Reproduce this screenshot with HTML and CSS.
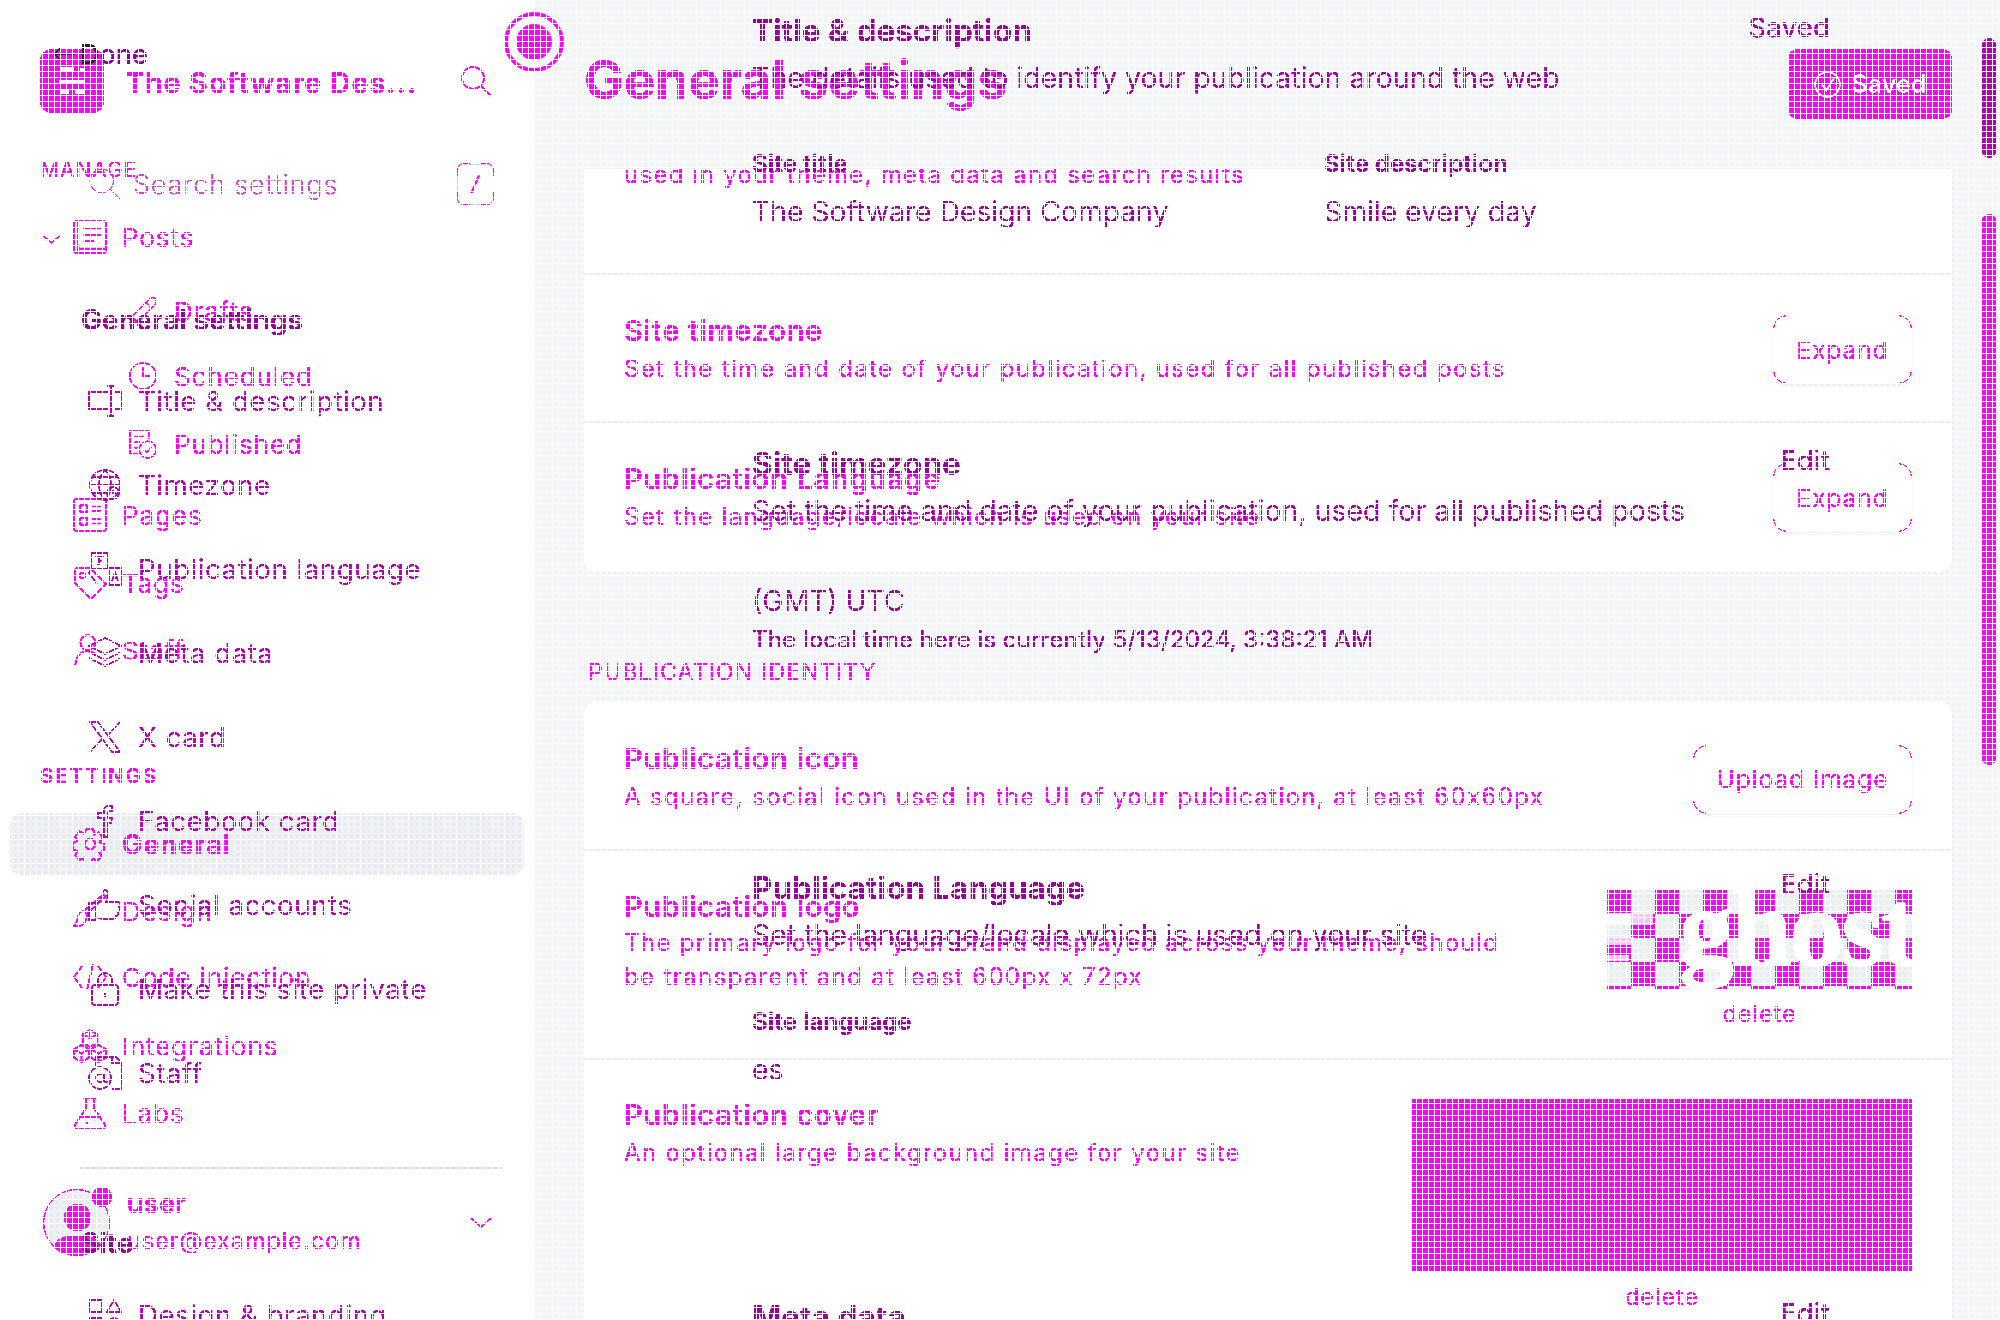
FILE: index.html
```html
<!DOCTYPE html>
<html lang="en">
<head>
<meta charset="utf-8">
<title>General settings</title>
<link rel="stylesheet" href="styles.css">
</head>
<body>
<svg class="defs" aria-hidden="true">
  <filter id="crisp" color-interpolation-filters="sRGB" x="0" y="0" width="100%" height="100%">
    <feComponentTransfer><feFuncG type="table" tableValues="0 0 0 0 0 0 0 .7 .8 .9 1"/></feComponentTransfer>
  </filter>
  <filter id="crisp-top" color-interpolation-filters="sRGB" x="0" y="0" width="100%" height="100%">
    <feComponentTransfer><feFuncA type="table" tableValues="0 .1 .5 .9 1 1"/></feComponentTransfer>
  </filter>
  <symbol id="i-search" viewBox="0 0 32 32"><circle cx="13" cy="13" r="11"/><path d="M21 21l10 10"/></symbol>
  <symbol id="i-posts" viewBox="0 0 32 32"><rect x="1" y="1" width="30" height="30" rx="2"/><path d="M5 1v30M10 8h16M10 14h16M10 20h10M5 27h26"/></symbol>
  <symbol id="i-pen" viewBox="0 0 32 32"><path d="M2 30l2-8L23 3a3 3 0 0 1 6 6L10 28zM19 7l6 6M4 22l6 6"/></symbol>
  <symbol id="i-clock" viewBox="0 0 32 32"><circle cx="16" cy="16" r="14"/><path d="M16 7v9h8"/></symbol>
  <symbol id="i-pub" viewBox="0 0 32 32"><path d="M11 26H2V2h20v9M7 8h10M7 14h6M7 20h3"/><circle cx="21" cy="22" r="9"/><path d="M17 22l3 3 5-6"/></symbol>
  <symbol id="i-pages" viewBox="0 0 32 32"><rect x="1" y="1" width="30" height="30" rx="2"/><rect x="7" y="7" width="6" height="6"/><rect x="7" y="19" width="6" height="6"/><path d="M18 8h8M18 12h8M18 20h8M18 24h8"/></symbol>
  <symbol id="i-tag" viewBox="0 0 32 32"><path d="M2 4a2 2 0 0 1 2-2h12l15 15-14 14L2 16z"/><circle cx="9" cy="9" r="2.5"/></symbol>
  <symbol id="i-staff" viewBox="0 0 32 32"><circle cx="14" cy="9" r="7"/><path d="M2 31c1-9 5-14 12-14 3 0 5 1 7 3"/></symbol>
  <symbol id="i-gear" viewBox="0 0 32 32"><circle cx="16" cy="16" r="5"/><path d="M13 2h6l1 5 4-2 4 5-3 4 4 2v6l-4 2 2 4-5 4-3-3-2 4h-6l-1-4-4 2-4-4 2-4-4-2v-6l4-2-2-4 4-5 4 2z"/></symbol>
  <symbol id="i-brush" viewBox="0 0 32 32"><path d="M31 2L13 19l-3-3L28 1zM10 16c-5 0-5 5-6 9l-3 5c6 1 12-1 12-11"/></symbol>
  <symbol id="i-code" viewBox="0 0 34 28"><path d="M9 3L1 14l8 11M25 3l8 11-8 11M20 1l-6 26"/></symbol>
  <symbol id="i-cubes" viewBox="0 0 32 32"><path d="M16 1l7 4v8l-7 4-7-4V5zM8 15l7 4v8l-7 4-7-4v-8zM24 15l7 4v8l-7 4-7-4v-8zM16 1v8M9 5l7 4 7-4M8 23v8M1 19l7 4 7-4M24 23v8M17 19l7 4 7-4"/></symbol>
  <symbol id="i-flask" viewBox="0 0 32 32"><path d="M10 2h12M12 2v10L2 27a2 2 0 0 0 2 3h24a2 2 0 0 0 2-3L20 12V2M7 20h18M12 25h2M19 24h2"/></symbol>
  <symbol id="i-monitor" viewBox="0 0 34 34"><path d="M20 8H1v17h19M26 8h7v17h-7M23 2v30M19 2h8M19 32h8"/></symbol>
  <symbol id="i-globe" viewBox="0 0 34 34"><circle cx="17" cy="17" r="15"/><path d="M2 17h30M4 9h26M4 25h14M17 2c-8 8-8 22 0 30M17 2c8 8 8 22 0 30"/><circle cx="25" cy="25" r="6"/><path d="M25 22v3h3"/></symbol>
  <symbol id="i-lang" viewBox="0 0 34 34"><rect x="3" y="1" width="17" height="16"/><path d="M7 5h9M11 5v8M8 13l6-5"/><rect x="21" y="16" width="12" height="17"/><path d="M24 29l3-9 3 9M24 26h6M3 17L1 21l8 11M20 19h2"/></symbol>
  <symbol id="i-stack" viewBox="0 0 34 34"><path d="M17 2L1 10l16 8 16-8zM1 16l16 8 16-8M1 22l16 8 16-8"/></symbol>
  <symbol id="i-x" viewBox="0 0 34 34"><path d="M2 2h8l22 30h-8zM32 2L20 15M14 19L2 32"/></symbol>
  <symbol id="i-fb" viewBox="0 0 34 34"><path d="M16 33V14h-6v-5h6V6c0-3 3-5 8-4v5c-3 0-4 0-4 2v5h4l-1 5h-3v14z"/></symbol>
  <symbol id="i-thumb" viewBox="0 0 34 34"><path d="M1 15h7v17H1zM8 16c4-2 7-7 7-12 0-3 5-3 5 2 0 3-1 5-2 8h12c3 0 3 4 1 5 2 2 1 4-1 5 1 2 0 4-2 4 0 3-2 3-4 3H14l-6-2"/></symbol>
  <symbol id="i-lock" viewBox="0 0 34 34"><rect x="4" y="13" width="26" height="20" rx="3"/><path d="M10 13V8a7 7 0 0 1 14 0v5M17 21v4"/></symbol>
  <symbol id="i-at" viewBox="0 0 34 34"><path d="M8 10V1h20l5 5v27h-9M24 1v6h9"/><circle cx="12" cy="22" r="11"/><circle cx="12" cy="22" r="4"/><path d="M16 18v6c0 3 4 3 5 0"/></symbol>
  <symbol id="i-design" viewBox="0 0 34 34"><rect x="2" y="2" width="12" height="12"/><rect x="2" y="20" width="12" height="12"/><circle cx="26" cy="26" r="6"/><path d="M26 2l7 12H19z"/></symbol>
  <symbol id="i-arrow" viewBox="0 0 26 18"><path d="M25 9H2M9 2L2 9l7 7"/></symbol>
  <symbol id="i-check" viewBox="0 0 24 24"><circle cx="12" cy="12" r="11"/><path d="M7 12l4 5 7-11"/></symbol>
  <symbol id="i-chev" viewBox="0 0 24 12"><path d="M1 1l11 10L23 1"/></symbol>
</svg>

<div class="page">
  <!-- publication admin layer -->
  <div class="admin">
    <aside class="side">
      <div class="brand">
        <div class="logo"><span class="lb lb-a"></span><span class="lb lb-t"></span><span class="lb lb-b"></span><span class="lb lb-c"></span><span class="lb lb-d"></span></div>
        <div class="brand-name">The Software Des...</div>
        <svg class="brand-search"><use href="#i-search"/></svg>
      </div>
      <div class="nav">
        <div class="nav-head">MANAGE</div>
        <div class="nav-item g-posts"><svg class="chev"><use href="#i-chev"/></svg><svg class="ico"><use href="#i-posts"/></svg><span>Posts</span></div>
        <div class="nav-item sub g26"><svg class="ico-s"><use href="#i-pen"/></svg><span>Drafts</span></div>
        <div class="nav-item sub g17"><svg class="ico-s"><use href="#i-clock"/></svg><span>Scheduled</span></div>
        <div class="nav-item sub g20"><svg class="ico-s"><use href="#i-pub"/></svg><span>Published</span></div>
        <div class="nav-item g23"><svg class="ico"><use href="#i-pages"/></svg><span>Pages</span></div>
        <div class="nav-item g20"><svg class="ico"><use href="#i-tag"/></svg><span>Tags</span></div>
        <div class="nav-item g19"><svg class="ico"><use href="#i-staff"/></svg><span>Staff</span></div>
        <div class="nav-head head-settings">SETTINGS</div>
        <div class="nav-item active g20"><svg class="ico"><use href="#i-gear"/></svg><span>General</span></div>
        <div class="nav-item g19"><svg class="ico"><use href="#i-brush"/></svg><span>Design</span></div>
        <div class="nav-item g18"><svg class="ico"><use href="#i-code"/></svg><span>Code injection</span></div>
        <div class="nav-item g21"><svg class="ico"><use href="#i-cubes"/></svg><span>Integrations</span></div>
        <div class="nav-item g19"><svg class="ico"><use href="#i-flask"/></svg><span>Labs</span></div>
      </div>
      <div class="divider"></div>
      <div class="user">
        <div class="avatar"><span class="av-head"></span><span class="av-body"></span><span class="av-dot"></span></div>
        <div class="user-text">
          <div class="user-name">user</div>
          <div class="user-mail">user@example.com</div>
        </div>
        <svg class="user-chev"><use href="#i-chev"/></svg>
      </div>
    </aside>
    <main class="main">
      <header class="main-head">
        <h1 class="main-title">General settings</h1>
        <div class="btn-saved"><svg class="btn-check"><use href="#i-check"/></svg><span>Saved</span></div>
      </header>
      <section class="card card-one">
        <div class="row row-clip"><div class="desc">used in your theme, meta data and search results</div></div>
        <div class="row row-a">
          <div class="row-text"><div class="r-title">Site timezone</div><div class="desc">Set the time and date of your publication, used for all published posts</div></div>
          <div class="btn btn-expand">Expand</div>
        </div>
        <div class="row row-b">
          <div class="row-text"><div class="r-title">Publication Language</div><div class="desc">Set the language/locale which is used on your site</div></div>
          <div class="btn btn-expand">Expand</div>
        </div>
      </section>
      <div class="group-label">PUBLICATION IDENTITY</div>
      <section class="card card-two">
        <div class="row row-c">
          <div class="row-text"><div class="r-title">Publication icon</div><div class="desc">A square, social icon used in the UI of your publication, at least 60x60px</div></div>
          <div class="btn btn-upload">Upload Image</div>
        </div>
        <div class="row row-d">
          <div class="row-text"><div class="r-title">Publication logo</div><div class="desc desc-wrap">The primary logo for your brand displayed across your theme, should be transparent and at least 600px x 72px</div></div>
          <div class="media media-logo">
            <div class="checker"><span class="gbar gbar-1"></span><span class="gbar gbar-2"></span><span class="gbar gbar-3"></span><span class="ghost-word">ghost</span></div>
            <div class="del">delete</div>
          </div>
        </div>
        <div class="row row-e">
          <div class="row-text"><div class="r-title">Publication cover</div><div class="desc">An optional large background image for your site</div></div>
          <div class="media media-cover">
            <div class="cover"></div>
            <div class="del">delete</div>
          </div>
        </div>
      </section>
    </main>
    <div class="scroll scroll-low"></div>
  </div>

  <div class="knob"><span class="knob-core"></span></div>

  <!-- settings layer -->
  <div class="settings">
    <nav class="s-side">
      <div class="done"><svg class="done-arrow"><use href="#i-arrow"/></svg><span><span class="done-d">D</span>one</span></div>
      <div class="s-search">
        <svg class="ico-t thin"><use href="#i-search"/></svg><span class="s-ph">Search settings</span><span class="kbd">/</span>
      </div>
      <div class="s-head">General settings</div>
      <div class="s-item"><svg class="ico-t"><use href="#i-monitor"/></svg><span>Title &amp; description</span></div>
      <div class="s-item"><svg class="ico-t"><use href="#i-globe"/></svg><span>Timezone</span></div>
      <div class="s-item"><svg class="ico-t"><use href="#i-lang"/></svg><span>Publication language</span></div>
      <div class="s-item"><svg class="ico-t"><use href="#i-stack"/></svg><span>Meta data</span></div>
      <div class="s-item"><svg class="ico-t"><use href="#i-x"/></svg><span>X card</span></div>
      <div class="s-item"><svg class="ico-t"><use href="#i-fb"/></svg><span>Facebook card</span></div>
      <div class="s-item"><svg class="ico-t"><use href="#i-thumb"/></svg><span>Social accounts</span></div>
      <div class="s-item"><svg class="ico-t"><use href="#i-lock"/></svg><span>Make this site private</span></div>
      <div class="s-item"><svg class="ico-t"><use href="#i-at"/></svg><span>Staff</span></div>
      <div class="s-head s-head-site">Site</div>
      <div class="s-item s-item-last"><svg class="ico-t"><use href="#i-design"/></svg><span>Design &amp; branding</span></div>
    </nav>
    <div class="s-main">
      <section class="s-sec s-sec-1">
        <div class="s-row"><div class="s-title">Title &amp; description</div><div class="s-act">Saved</div></div>
        <div class="s-desc">The details used to identify your publication around the web</div>
        <div class="s-fields">
          <div class="s-field"><div class="s-label">Site title</div><div class="s-val">The Software Design Company</div></div>
          <div class="s-field"><div class="s-label">Site description</div><div class="s-val">Smile every day</div></div>
        </div>
      </section>
      <section class="s-sec s-sec-2">
        <div class="s-row"><div class="s-title">Site timezone</div><div class="s-act">Edit</div></div>
        <div class="s-desc">Set the time and date of your publication, used for all published posts</div>
        <div class="s-val s-val-gmt">(GMT) UTC</div>
        <div class="s-note">The local time here is currently 5/13/2024, 3:38:21 AM</div>
      </section>
      <section class="s-sec s-sec-3">
        <div class="s-row"><div class="s-title">Publication Language</div><div class="s-act">Edit</div></div>
        <div class="s-desc">Set the language/locale which is used on your site</div>
        <div class="s-label s-label-lang">Site language</div>
        <div class="s-val s-val-es">es</div>
      </section>
      <section class="s-sec s-sec-4">
        <div class="s-row"><div class="s-title">Meta data</div><div class="s-act">Edit</div></div>
      </section>
    </div>
    <div class="scroll scroll-high"></div>
  </div>

  <div class="mesh"></div>
</div>
</body>
</html>
```
FILE: styles.css
```css
* { box-sizing: border-box; }
html, body { margin: 0; padding: 0; background: #fff; }
body { font-family: Inter, "Liberation Sans", sans-serif; }
.defs { position: absolute; width: 0; height: 0; }
svg { fill: none; stroke: currentColor; stroke-width: 1.6; overflow: visible; }
.page { position: relative; width: 2000px; height: 1320px; overflow: hidden; color: #f0f; }

/* lower layer */
.admin { display: flex; height: 1320px; filter: url(#crisp); }
.side { width: 535px; flex: none; background: #fff; }
.brand { display: flex; align-items: center; height: 64px; margin-top: 49px; padding-left: 40px; }
.logo { position: relative; width: 64px; height: 64px; border-radius: 12px; background: #f0f; flex: none; }
.lb { position: absolute; background: #fff; }
.lb-a { left: 20px; top: 18px; width: 14px; height: 5px; }
.lb-t { left: 40px; top: 19px; width: 4px; height: 4px; }
.lb-b { left: 19px; top: 31px; width: 25px; height: 3px; }
.lb-c { left: 20px; top: 41px; width: 9px; height: 4px; }
.lb-d { left: 35px; top: 41px; width: 9px; height: 4px; }
.brand-name { margin-left: 21px; margin-top: 2px; font-size: 28.5px; font-weight: 700; letter-spacing: .9px; width: 335px; white-space: nowrap; }
.brand-search { width: 32px; height: 32px; }
.nav { display: flex; flex-direction: column; margin-top: 33px; }
.nav-head { height: 48px; line-height: 48px; padding-left: 40px; font-size: 21px; letter-spacing: 1px; }
.head-settings { margin-top: 78px; font-size: 20.5px; font-weight: 600; letter-spacing: 1.9px; }
.nav-item { display: flex; align-items: center; height: 48px; padding-left: 73px; font-size: 26px; letter-spacing: .9px; position: relative; white-space: nowrap; }
.nav-item span { margin-left: 15px; }
.ico { width: 34px; height: 34px; flex: none; }
.chev { position: absolute; left: 43px; top: 22px; width: 17px; height: 9px; }
.sub { padding-left: 128px; }
.ico-s { width: 30px; height: 30px; flex: none; }
.sub span { margin-left: 16px; }
.g-posts { margin-top: 19px; }
.g17 { margin-top: 17px; } .g18 { margin-top: 18px; } .g19 { margin-top: 19px; }
.g20 { margin-top: 20px; } .g21 { margin-top: 21px; } .g23 { margin-top: 23px; } .g26 { margin-top: 26px; }
.active { font-weight: 700; font-size: 27px; }
.active::before { content: ""; position: absolute; left: 10px; top: -7px; width: 514px; height: 62px; background: #e9ebf2; border-radius: 12px; z-index: 0; }
.active > * { position: relative; z-index: 1; }
.divider { height: 2px; background: #ddd; margin: 30px 33px 0 80px; }
.user { display: flex; align-items: center; margin-top: 19px; padding-left: 43px; height: 68px; position: relative; }
.avatar { position: relative; width: 67px; height: 67px; border-radius: 50%; background: #e6ecf2; border: 1px solid #f0f; flex: none; }
.av-head { position: absolute; left: 20px; top: 14px; width: 27px; height: 27px; border-radius: 50%; background: #f0f; }
.av-body { position: absolute; left: 11px; top: 45px; width: 45px; height: 20px; border-radius: 50% 50% 45% 45%; background: #f0f; }
.av-dot { position: absolute; left: 48px; top: -3px; width: 20px; height: 20px; border-radius: 50%; background: #f0f; }
.user-text { margin-left: 17px; width: 343px; }
.user-name { font-size: 26px; font-weight: 700; letter-spacing: .7px; line-height: 37px; }
.user-mail { font-size: 23.5px; letter-spacing: .9px; line-height: 37px; }
.user-chev { width: 22px; height: 11px; }

.main { flex: 1; background: #f3f4f7; padding: 0 48px 0 49px; min-width: 0; }
.main-head { display: flex; justify-content: space-between; height: 169px; padding-top: 49px; }
.main-title { margin: -1px 0 0; font-size: 53px; line-height: 64px; font-weight: 700; color: #f0f; }
.btn-saved { display: flex; align-items: center; justify-content: center; gap: 11px; width: 164px; height: 70px; border-radius: 10px; background: #f0f; color: #fff; font-size: 25px; font-weight: 600; }
.btn-check { width: 27px; height: 27px; stroke-width: 2; }
.card { background: #fff; border-radius: 10px; overflow: hidden; box-shadow: 0 0 2px rgba(0,0,0,.08); }
.card-one { height: 403px; border-radius: 0 0 10px 10px; }
.card-two { height: 640px; }
.row { display: flex; justify-content: space-between; padding: 0 40px; border-bottom: 2px solid #e9ecf0; }
.row-clip { height: 106px; }
.row-clip .desc { margin-top: -14px; line-height: 40px; letter-spacing: 1.28px; }
.row-a { height: 148px; align-items: center; padding-top: 3px; }
.row-b { height: 149px; align-items: center; border-bottom: 0; }
.row-c { height: 149px; align-items: center; padding-top: 7px; }
.row-c .r-title { margin-top: -2px; }
.row-d { height: 209px; padding-top: 37px; }
.row-e { padding-top: 36px; border-bottom: 0; }
.r-title { font-size: 29px; font-weight: 600; line-height: 38px; letter-spacing: .7px; white-space: nowrap; }
.desc { font-size: 24px; line-height: 38px; letter-spacing: 1.35px; white-space: nowrap; }
.desc-wrap { white-space: normal; width: 885px; line-height: 34px; }
.btn { display: flex; align-items: center; justify-content: center; height: 69px; border-radius: 14px; background: #fff; font-size: 24.5px; letter-spacing: .9px; position: relative; box-shadow: 0 2px 3px rgba(0,0,0,.09); flex: none; }
.btn::before, .kbd::before { content: ""; position: absolute; inset: 0; border: 1.5px solid #f0f; border-radius: 14px;
  -webkit-mask: linear-gradient(#000 0 0) 0 0/13px 13px no-repeat, linear-gradient(#000 0 0) 100% 0/13px 13px no-repeat, linear-gradient(#000 0 0) 0 100%/13px 13px no-repeat, linear-gradient(#000 0 0) 100% 100%/13px 13px no-repeat;
  mask: linear-gradient(#000 0 0) 0 0/13px 13px no-repeat, linear-gradient(#000 0 0) 100% 0/13px 13px no-repeat, linear-gradient(#000 0 0) 0 100%/13px 13px no-repeat, linear-gradient(#000 0 0) 100% 100%/13px 13px no-repeat; }
.btn-expand { width: 139px; }
.btn-upload { width: 219px; }
.group-label { height: 130px; padding: 78px 0 0 4px; font-size: 23px; line-height: 44px; letter-spacing: 1.2px; white-space: nowrap; }
.media { display: flex; flex-direction: column; align-items: center; padding-top: 2px; }
.media-cover { padding-top: 3px; }
.checker { position: relative; width: 305px; height: 99px; overflow: hidden; background: conic-gradient(#e9eef2 25%, #f0f 0 50%, #e9eef2 0 75%, #f0f 0) 0 0/48px 48px; }
.gbar { position: absolute; left: 0; background: rgba(255,255,255,.75); }
.gbar-1 { top: 23px; width: 46px; height: 12px; }
.gbar-2 { top: 47px; width: 27px; height: 8px; }
.gbar-3 { top: 65px; width: 22px; height: 6px; }
.ghost-word { position: absolute; left: 72px; top: -22px; font-family: "Liberation Serif", serif; font-weight: 700; font-size: 110px; line-height: 120px; letter-spacing: -3px; color: #fff; -webkit-text-stroke: 1.5px #fff; }
.del { font-size: 23.5px; letter-spacing: .9px; line-height: 50px; }
.cover { width: 500px; height: 173px; background: #f0f; }
.scroll { position: absolute; left: 1982px; width: 14px; border-radius: 7px; }
.scroll-low { top: 214px; height: 551px; background: #f0f; }
.scroll-high { top: 38px; height: 120px; background: #b000b0; }
.knob { position: absolute; left: 504px; top: 12px; width: 60px; height: 60px; border: 4px solid #f0f; border-radius: 50%; display: flex; align-items: center; justify-content: center; }
.knob-core { width: 36px; height: 36px; border-radius: 50%; background: #f0f; }

/* upper layer */
.settings { position: absolute; inset: 0; display: flex; color: #a000a0; pointer-events: none; filter: url(#crisp-top); }
.s-side { width: 752px; flex: none; display: flex; flex-direction: column; }
.s-side > * { flex: none; }
.done { display: flex; align-items: center; height: 32px; margin-top: 38px; padding-left: 52px; gap: 4px; font-size: 27px; font-weight: 500; color: #900090; }
.done-arrow { width: 24px; height: 16px; color: #222; }
.done-d { color: #222; }
.s-search { display: flex; align-items: center; height: 44px; margin-top: 92px; padding-left: 88px; color: #f0f; width: 493px; }
.thin { stroke-width: 1.1; color: #d040d0; }
.s-ph { margin-left: 11px; font-size: 27px; font-weight: 300; letter-spacing: .8px; flex: 1; color: #d040d0; white-space: nowrap; }
.kbd { position: relative; width: 36px; height: 41px; border: 1.5px solid #ccc; border-radius: 6px; display: flex; align-items: center; justify-content: center; font-size: 20px; font-style: italic; font-weight: 600; color: #f0f; flex: none; }
.kbd::before { inset: -1.5px; border-radius: 6px; }
.s-head { height: 44px; line-height: 44px; margin-top: 92px; padding-left: 81px; font-size: 27.8px; font-weight: 700; white-space: nowrap; color: #990099; }
.s-item { display: flex; align-items: center; height: 84px; padding-left: 88px; font-size: 27.7px; letter-spacing: .5px; white-space: nowrap; color: #b000b0; }
.s-item span { margin-left: 16px; }
.s-head + .s-item { margin-top: 17px; }
.ico-t { width: 34px; height: 34px; flex: none; }
.s-head-site { margin-top: 106px; }
.s-item-last { margin-top: 28px !important; height: 44px; }
.s-main { width: 1078px; flex: none; display: flex; flex-direction: column; }
.s-sec { flex: none; }
.s-sec-1 { height: 433px; margin-top: 11px; }
.s-sec-2 { height: 424px; }
.s-sec-3 { height: 429px; }
.s-row { display: flex; justify-content: space-between; height: 40px; line-height: 40px; }
.s-title { font-size: 31.5px; font-weight: 700; white-space: nowrap; color: #990099; }
.s-act { font-size: 27.5px; line-height: 33px; font-weight: 500; color: #a800a8; }
.s-desc { font-size: 28.5px; line-height: 40px; margin-top: 7px; white-space: nowrap; color: #a000a0; }
.s-fields { display: flex; margin-top: 46px; }
.s-field { width: 572px; flex: none; }
.s-label { font-size: 24px; font-weight: 700; line-height: 40px; color: #990099; white-space: nowrap; }
.s-val { font-size: 28.3px; line-height: 40px; margin-top: 8px; white-space: nowrap; color: #990099; }
.s-val-gmt { margin-top: 50px; }
.s-note { font-size: 24px; line-height: 40px; margin-top: -1px; white-space: nowrap; font-weight: 500; }
.s-label-lang { margin-top: 47px; }
.s-val-es { margin-top: 8px; }

/* fine mesh over the whole capture */
.mesh { position: absolute; inset: 0; pointer-events: none;
  background-image: repeating-linear-gradient(90deg, #fff 0 1px, transparent 1px 6px), repeating-linear-gradient(180deg, transparent 0 5px, #fff 5px 6px); }
```
